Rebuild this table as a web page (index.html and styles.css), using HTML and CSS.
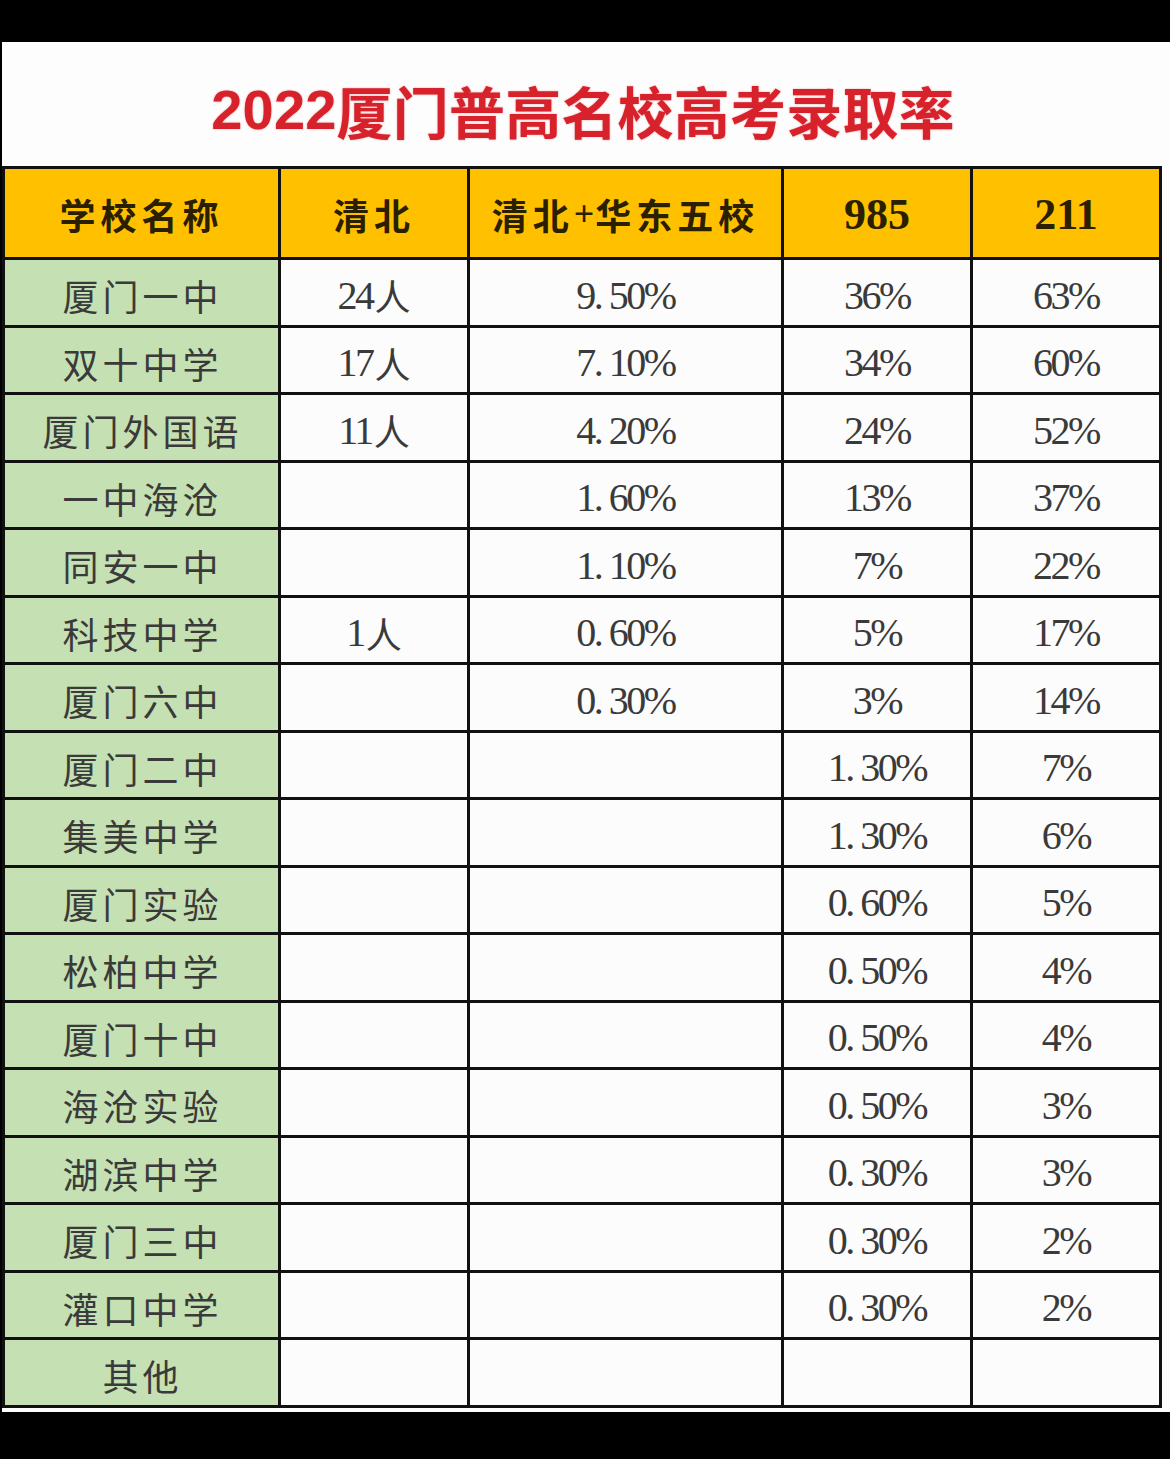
FILE: index.html
```html
<!DOCTYPE html>
<html lang="zh-CN">
<head>
<meta charset="utf-8">
<title>2022厦门普高名校高考录取率</title>
<link rel="stylesheet" href="styles.css">
</head>
<body>
<div class="top-bar"></div>
<div class="sheet">
  <h1 class="title"><span class="num">2022</span>厦门普高名校高考录取率</h1>
  <div class="grid">
    <div class="cell head">学校名称</div>
    <div class="cell head">清北</div>
    <div class="cell head">清北<span class="plus">+</span>华东五校</div>
    <div class="cell head num-h">985</div>
    <div class="cell head num-h">211</div>

    <div class="cell name">厦门一中</div><div class="cell val">24<span class="cjk">人</span></div><div class="cell val">9. 50%</div><div class="cell val">36%</div><div class="cell val">63%</div>
    <div class="cell name">双十中学</div><div class="cell val">17<span class="cjk">人</span></div><div class="cell val">7. 10%</div><div class="cell val">34%</div><div class="cell val">60%</div>
    <div class="cell name">厦门外国语</div><div class="cell val">11<span class="cjk">人</span></div><div class="cell val">4. 20%</div><div class="cell val">24%</div><div class="cell val">52%</div>
    <div class="cell name">一中海沧</div><div class="cell val"></div><div class="cell val">1. 60%</div><div class="cell val">13%</div><div class="cell val">37%</div>
    <div class="cell name">同安一中</div><div class="cell val"></div><div class="cell val">1. 10%</div><div class="cell val">7%</div><div class="cell val">22%</div>
    <div class="cell name">科技中学</div><div class="cell val">1<span class="cjk">人</span></div><div class="cell val">0. 60%</div><div class="cell val">5%</div><div class="cell val">17%</div>
    <div class="cell name">厦门六中</div><div class="cell val"></div><div class="cell val">0. 30%</div><div class="cell val">3%</div><div class="cell val">14%</div>
    <div class="cell name">厦门二中</div><div class="cell val"></div><div class="cell val"></div><div class="cell val">1. 30%</div><div class="cell val">7%</div>
    <div class="cell name">集美中学</div><div class="cell val"></div><div class="cell val"></div><div class="cell val">1. 30%</div><div class="cell val">6%</div>
    <div class="cell name">厦门实验</div><div class="cell val"></div><div class="cell val"></div><div class="cell val">0. 60%</div><div class="cell val">5%</div>
    <div class="cell name">松柏中学</div><div class="cell val"></div><div class="cell val"></div><div class="cell val">0. 50%</div><div class="cell val">4%</div>
    <div class="cell name">厦门十中</div><div class="cell val"></div><div class="cell val"></div><div class="cell val">0. 50%</div><div class="cell val">4%</div>
    <div class="cell name">海沧实验</div><div class="cell val"></div><div class="cell val"></div><div class="cell val">0. 50%</div><div class="cell val">3%</div>
    <div class="cell name">湖滨中学</div><div class="cell val"></div><div class="cell val"></div><div class="cell val">0. 30%</div><div class="cell val">3%</div>
    <div class="cell name">厦门三中</div><div class="cell val"></div><div class="cell val"></div><div class="cell val">0. 30%</div><div class="cell val">2%</div>
    <div class="cell name">灌口中学</div><div class="cell val"></div><div class="cell val"></div><div class="cell val">0. 30%</div><div class="cell val">2%</div>
    <div class="cell name">其他</div><div class="cell val"></div><div class="cell val"></div><div class="cell val"></div><div class="cell val"></div>
  </div>
</div>
</body>
</html>
```

FILE: styles.css
```css
html, body {
  margin: 0;
  padding: 0;
  background: #000;
}

.top-bar {
  height: 42px;
  background: #000;
}

.sheet {
  margin-left: 2px;
  width: 1168px;
  background: #fdfdfd;
  padding-bottom: 4px;
}

.title {
  margin: 0;
  height: 124px;
  box-sizing: border-box;
  padding-top: 10px;
  display: flex;
  align-items: center;
  justify-content: center;
  padding-right: 6px;
  font-family: "Noto Sans CJK SC", "Liberation Sans", sans-serif;
  font-weight: 700;
  font-size: 56px;
  color: #d8222b;
  text-shadow: 0 0 2px rgba(216, 34, 43, 0.45);
  letter-spacing: 0.2px;
}

.title .num {
  font-family: "Liberation Sans", sans-serif;
  font-weight: 700;
}

.grid {
  display: grid;
  grid-template-columns: 276px 189px 314px 189px 189px;
  grid-template-rows: 91px repeat(17, 67.5px);
  border-top: 3px solid #111;
  border-left: 3px solid #111;
  box-sizing: border-box;
  width: 1160px;
}

.cell {
  box-sizing: border-box;
  border-right: 3px solid #111;
  border-bottom: 3px solid #111;
  display: flex;
  align-items: center;
  justify-content: center;
  background: #fcfcfc;
  color: #3a3a3a;
}

.head {
  background: #ffc000;
  color: #2a2000;
  font-family: "Noto Sans CJK SC", "Liberation Serif", sans-serif;
  font-weight: 700;
  font-size: 36px;
  letter-spacing: 5px;
  padding-top: 2px;
}

.head .plus {
  font-family: "Liberation Serif", serif;
  letter-spacing: 1px;
}

.num-h {
  font-family: "Liberation Serif", serif;
  font-size: 44px;
  letter-spacing: 0;
}

.name {
  background: #c5e0b3;
  font-family: "Noto Sans CJK SC", sans-serif;
  font-weight: 400;
  font-size: 36px;
  letter-spacing: 4px;
  padding-top: 6px;
  padding-left: 2px;
}

.val {
  font-family: "Liberation Serif", serif;
  font-size: 40px;
  letter-spacing: -2.5px;
  padding-top: 6px;
}

.val .cjk {
  font-family: "Noto Sans CJK SC", sans-serif;
  font-size: 36px;
  letter-spacing: 0;
  margin-left: 2px;
}
```
